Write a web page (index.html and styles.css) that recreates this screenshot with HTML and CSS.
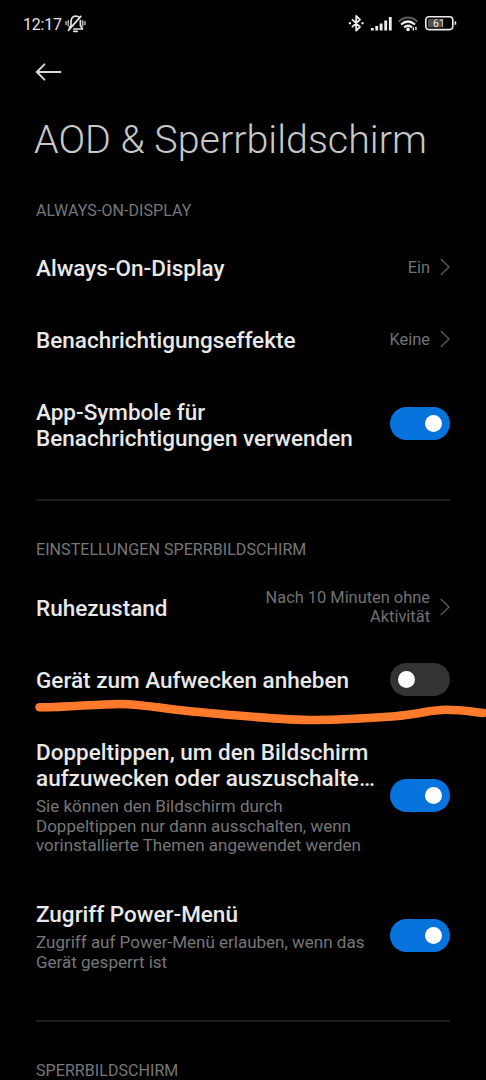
FILE: index.html
```html
<!DOCTYPE html>
<html lang="de">
<head>
<meta charset="utf-8">
<title>AOD &amp; Sperrbildschirm</title>
<link rel="stylesheet" href="styles.css">
</head>
<body>
<div class="screen">
  <header class="status">
    <span class="clock">12:17</span>
    <svg class="mute" width="22" height="20" viewBox="0 0 22 20" fill="none" stroke="#e4e4e4" stroke-width="1.7" stroke-linecap="round" stroke-linejoin="round">
      <path d="M4.5 14V13.5L6 11.5V7.5Q6.2 2.5 10.7 2Q13 2 14.2 3.3M15.4 6.5V11.5L17.4 14.4V15H8.8M3.4 16.4L15.8 2.4M8.8 17.3H12.2"/>
      <path d="M1 7.5V10.5M3.2 6.5V11.8M17.8 6.5V11.8M20 7.5V10.5" stroke-width="1.2"/>
    </svg>
    <svg class="indicators" width="110" height="20" viewBox="0 0 110 20" fill="none" stroke="#ededed">
      <path d="M5 5.3L13 12.9L9.2 16.6V2L13 5.6L5 13.2" stroke-width="1.8" stroke-linejoin="round"/>
      <path d="M1.8 9.3H4M14.4 9.3H16.6" stroke-width="2.1"/>
      <path d="M25.3 16.5V14M29.7 16.5V12M34.1 16.5V9.5M38.7 16.5V6.5M43.3 16.5V3" stroke-width="2.8"/>
      <path d="M51.5 7.7Q61 -.6 70.5 7.7" stroke="#5c5c5c" stroke-width="2"/>
      <path d="M54 10.5Q61 4.4 68 10.5M57.1 13.3Q61 10.2 65 13.3" stroke-width="2.3"/>
      <circle cx="61" cy="15.4" r="1.8" fill="#ededed" stroke="none"/>
      <path d="M66.3 13.3V16.5M68.9 12.8V16" stroke-width="1.4"/>
      <rect x="78.8" y="2.8" width="27" height="12.8" rx="3.3" stroke-width="1.6"/>
      <rect x="81" y="5" width="13.5" height="8.4" rx="1" fill="#515151" stroke="none"/>
      <path d="M108.4 7.4V10.8" stroke-width="1.6"/>
      <text x="92" y="12.8" text-anchor="middle" class="charge">61</text>
    </svg>
  </header>

  <nav class="toolbar">
    <svg width="28" height="20" viewBox="0 0 28 20" fill="none" stroke="#dadada" stroke-width="1.9" stroke-linecap="round" stroke-linejoin="round"><path d="M9.5 2.3L1.8 10L9.5 17.7M1.8 10H25.5"/></svg>
  </nav>
  <h1 class="title">AOD &amp; Sperrbildschirm</h1>

  <section class="group">
    <h2 class="label label-first">ALWAYS-ON-DISPLAY</h2>
    <div class="row">
      <span class="name">Always-On-Display</span>
      <span class="value">Ein</span>
      <svg class="chevron" viewBox="0 0 10 18"><path d="M.8 1L9 9L.8 17"/></svg>
    </div>
    <div class="row">
      <span class="name">Benachrichtigungseffekte</span>
      <span class="value">Keine</span>
      <svg class="chevron" viewBox="0 0 10 18"><path d="M.8 1L9 9L.8 17"/></svg>
    </div>
    <div class="row row-double">
      <span class="name">App-Symbole für<br>Benachrichtigungen verwenden</span>
      <span class="toggle on"></span>
    </div>
  </section>

  <section class="group divided">
    <h2 class="label">EINSTELLUNGEN SPERRBILDSCHIRM</h2>
    <div class="row">
      <span class="name">Ruhezustand</span>
      <span class="value">Nach 10 Minuten ohne<br>Aktivität</span>
      <svg class="chevron" viewBox="0 0 10 18"><path d="M.8 1L9 9L.8 17"/></svg>
    </div>
    <div class="row marked">
      <span class="name">Gerät zum Aufwecken anheben</span>
      <span class="toggle"></span>
      <svg class="stroke" width="486" height="40" viewBox="0 694 486 40"><path d="M39.5 707.3C70 707.3 95 703.9 120 703.9C145 704.2 160 708.5 190 711.3C235 715.2 280 720.1 315 720.1C350 719.8 365 718.5 395 716.3C420 714 430 710 446 709.8C460 709.8 472 711.7 483.5 713"/></svg>
    </div>
    <div class="row row-tall">
      <div class="text">
        <span class="name">Doppeltippen, um den Bildschirm<br>aufzuwecken oder auszuschalte…</span>
        <p class="hint">Sie können den Bildschirm durch<br>Doppeltippen nur dann ausschalten, wenn<br>vorinstallierte Themen angewendet werden</p>
      </div>
      <span class="toggle on"></span>
    </div>
    <div class="row row-medium">
      <div class="text">
        <span class="name">Zugriff Power-Menü</span>
        <p class="hint">Zugriff auf Power-Menü erlauben, wenn das<br>Gerät gesperrt ist</p>
      </div>
      <span class="toggle on"></span>
    </div>
  </section>

  <section class="group divided">
    <h2 class="label">SPERRBILDSCHIRM</h2>
  </section>
</div>
</body>
</html>
```
FILE: styles.css
```css
* { box-sizing: border-box; }
body { margin: 0; background: #000; }
.screen {
  width: 486px;
  height: 1080px;
  overflow: hidden;
  background: #000;
  color: #e8e8e8;
  font-family: Roboto, "Noto Sans", sans-serif;
}
.status {
  height: 48px;
  padding: 0 29px 0 23px;
  display: flex;
  align-items: center;
}
.clock { font-size: 16px; letter-spacing: -.2px; color: #e4e4e4; width: 42px; }
.indicators { margin-left: auto; }
.charge { font: 400 10.5px Roboto, sans-serif; fill: #ededed; stroke: none; }
.toolbar { height: 48px; padding: 0 35px; display: flex; align-items: center; }
.title {
  margin: 0;
  padding-left: 34px;
  height: 88px;
  line-height: 88px;
  font-size: 39.4px;
  font-weight: 300;
  white-space: nowrap;
  color: #c8c8c8;
}
.group { padding: 0 36px; }
.divided::before {
  content: "";
  display: block;
  height: 2px;
  background: #1c1c1c;
  margin-top: 26px;
}
.label {
  margin: 0;
  height: 70px;
  padding-top: 39px;
  line-height: 20px;
  font-size: 16px;
  letter-spacing: .07px;
  font-weight: 400;
  color: #777;
  white-space: nowrap;
}
.label-first { height: 47px; padding-top: 17px; }
.row { display: flex; align-items: center; height: 72px; }
.row-double { height: 98px; }
.row-double .toggle { margin-bottom: 1px; }
.row-tall { height: 161px; }
.row-medium { height: 118px; }
.row > .name { padding-top: 1px; }
.name {
  display: block;
  font-size: 22.5px;
  line-height: 26px;
  font-weight: 500;
  white-space: nowrap;
}
.text { padding-top: 4px; }
.hint {
  margin: 6px 0 0;
  font-size: 17px;
  line-height: 19.7px;
  color: #777;
  white-space: nowrap;
}
.value {
  margin-left: auto;
  font-size: 16.4px;
  line-height: 19px;
  text-align: right;
  color: #727272;
  white-space: nowrap;
}
.chevron {
  width: 10px;
  height: 18px;
  margin-left: 10px;
  flex: none;
  fill: none;
  stroke: #5c5c5c;
  stroke-width: 1.3;
}
.toggle {
  flex: none;
  margin-left: auto;
  width: 60px;
  height: 33px;
  border-radius: 17px;
  padding: 0 8px;
  background: #333;
  display: flex;
  align-items: center;
}
.toggle::before {
  content: "";
  width: 17px;
  height: 17px;
  border-radius: 50%;
  background: #fff;
}
.toggle.on { background: #0774dd; justify-content: flex-end; }
.marked { position: relative; }
.stroke {
  position: absolute;
  left: -36px;
  top: 51px;
  fill: none;
  stroke: #ff7a2a;
  stroke-width: 8.5;
  stroke-linecap: round;
}
```
